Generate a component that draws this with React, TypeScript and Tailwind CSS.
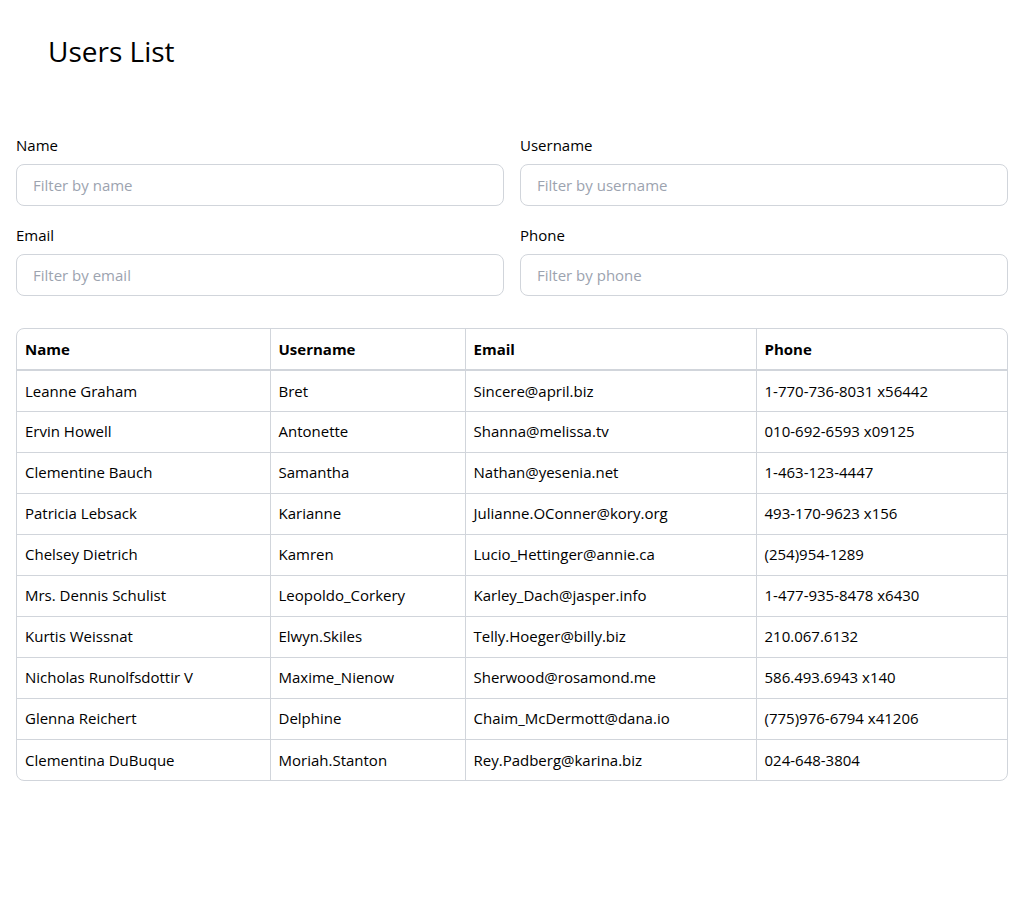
import React from "react";

const users = [
  ["Leanne Graham", "Bret", "Sincere@april.biz", "1-770-736-8031 x56442"],
  ["Ervin Howell", "Antonette", "Shanna@melissa.tv", "010-692-6593 x09125"],
  ["Clementine Bauch", "Samantha", "Nathan@yesenia.net", "1-463-123-4447"],
  ["Patricia Lebsack", "Karianne", "Julianne.OConner@kory.org", "493-170-9623 x156"],
  ["Chelsey Dietrich", "Kamren", "Lucio_Hettinger@annie.ca", "(254)954-1289"],
  ["Mrs. Dennis Schulist", "Leopoldo_Corkery", "Karley_Dach@jasper.info", "1-477-935-8478 x6430"],
  ["Kurtis Weissnat", "Elwyn.Skiles", "Telly.Hoeger@billy.biz", "210.067.6132"],
  ["Nicholas Runolfsdottir V", "Maxime_Nienow", "Sherwood@rosamond.me", "586.493.6943 x140"],
  ["Glenna Reichert", "Delphine", "Chaim_McDermott@dana.io", "(775)976-6794 x41206"],
  ["Clementina DuBuque", "Moriah.Stanton", "Rey.Padberg@karina.biz", "024-648-3804"],
];

const fields = [
  ["Name", "Filter by name"],
  ["Username", "Filter by username"],
  ["Email", "Filter by email"],
  ["Phone", "Filter by phone"],
];

const widths = ["w-[253px]", "w-[195px]", "w-[291px]", ""];

export default function App() {
  return (
    <div
      className="p-4 text-[15px] text-black bg-white"
      style={{ fontFamily: '"Open Sans", "Noto Sans", sans-serif' }}
    >
      <h1 className="mt-[17px] px-8 text-[28px] leading-[36px] font-normal">Users List</h1>
      <div className="mt-[65px] grid grid-cols-2 gap-x-4 gap-y-[18px]">
        {fields.map(([label, ph]) => (
          <div key={label} className="flex flex-col">
            <label className="text-[15px] leading-[22px]">{label}</label>
            <input
              placeholder={ph}
              className="mt-[8px] h-[42px] rounded-lg border border-[#d1d5db] px-4 text-[15px] placeholder:text-[#9ca3af] outline-none"
            />
          </div>
        ))}
      </div>
      <div className="mt-[32px] rounded-lg border border-[#d1d5db] overflow-hidden">
        <table className="w-full border-collapse table-fixed">
          <thead>
            <tr>
              {["Name", "Username", "Email", "Phone"].map((h, i) => (
                <th
                  key={h}
                  className={`${widths[i]} h-[41px] px-2 text-left font-bold text-[15px] border-b-2 border-[#d1d5db] ${i < 3 ? "border-r" : ""}`}
                >
                  {h}
                </th>
              ))}
            </tr>
          </thead>
          <tbody>
            {users.map((u, r) => (
              <tr key={r}>
                {u.map((c, i) => (
                  <td
                    key={i}
                    className={`h-[41px] px-2 text-[15px] border-[#d1d5db] ${r < users.length - 1 ? "border-b" : ""} ${i < 3 ? "border-r" : ""}`}
                  >
                    {c}
                  </td>
                ))}
              </tr>
            ))}
          </tbody>
        </table>
      </div>
    </div>
  );
}
